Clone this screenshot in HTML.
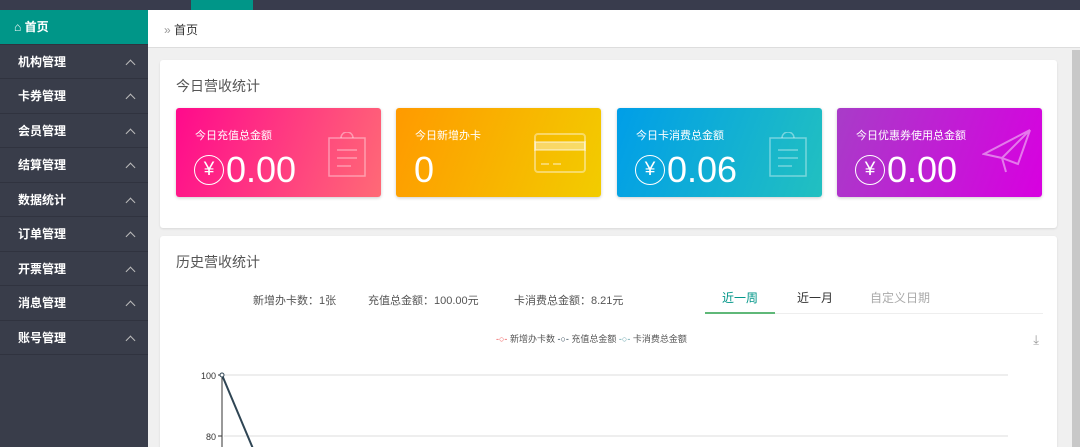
<!DOCTYPE html><html><head><meta charset="utf-8"><style>
*{margin:0;padding:0;box-sizing:border-box}
html,body{width:1080px;height:447px;overflow:hidden}
body{background:#f0f0f0;font-family:"Liberation Sans","Noto Sans CJK SC",sans-serif;position:relative}
.top{position:absolute;left:0;top:0;width:1080px;height:10px;background:#393c4d}
.side{position:absolute;left:0;top:10px;width:148px;height:437px;background:#393d4a}
.mi{height:34.5px;border-bottom:1px solid #30333f;color:#fff;font-size:12px;font-weight:bold;line-height:34px;padding-left:18px;position:relative}
.mi:after{content:"";position:absolute;right:14px;top:16px;width:6px;height:6px;border-left:1px solid #bbb;border-top:1px solid #bbb;transform:rotate(45deg)}
.home{background:#009688;padding-left:14px}
.home:after{display:none}
.crumb{position:absolute;left:148px;top:10px;width:932px;height:38px;background:#fff;border-bottom:1px solid #ddd;font-size:12px;color:#333;line-height:40px;padding-left:16px}
.panel{position:absolute;left:160px;width:897px;background:#fff;border-radius:3px;box-shadow:0 1px 2px rgba(0,0,0,.1)}
.pt{position:absolute;left:16px;top:16px;font-size:14px;color:#555}
.card{position:absolute;top:48px;width:205px;height:89px;border-radius:3px;color:#fff;box-shadow:0 1px 3px rgba(0,0,0,.2)}
.card .l{position:absolute;left:19px;top:19px;font-size:11px}
.card .v{position:absolute;left:18px;top:40px;font-size:36px;line-height:44px;display:flex;align-items:center}
.yen{display:inline-block;width:30px;height:30px;border:1px solid #fff;border-radius:50%;font-size:19px;line-height:28px;text-align:center;margin-right:2px;font-weight:300}
.card svg{position:absolute;right:14px;top:24px}
.sb{position:absolute;right:0;top:50px;width:8px;height:397px;background:#c8c8c8}
</style></head><body>
<div class="top"><div style="position:absolute;left:191px;width:62px;height:10px;background:#009688"></div></div>
<div class="side">
<div class="mi home">⌂ 首页</div>
<div class="mi">机构管理</div><div class="mi">卡券管理</div><div class="mi">会员管理</div><div class="mi">结算管理</div><div class="mi">数据统计</div><div class="mi">订单管理</div><div class="mi">开票管理</div><div class="mi">消息管理</div><div class="mi">账号管理</div>
</div>
<div class="crumb"><span style="color:#999">»</span> 首页</div>
<div class="panel" style="top:60px;height:168px">
<div class="pt">今日营收统计</div>
<div class="card" style="left:16px;background:linear-gradient(110deg,#ff0a8c,#ff6a76)"><div class="l">今日充值总金额</div><div class="v"><span class="yen">¥</span>0.00</div>
<svg width="40" height="46" fill="none" stroke="rgba(255,255,255,.4)" stroke-width="1.5"><rect x="2" y="6" width="36" height="38"/><path d="M14 6a6 6 0 0 1 12 0M10 18h20M10 26h20M10 34h14"/></svg></div>
<div class="card" style="left:236px;background:linear-gradient(110deg,#ff9a00,#f2cc00)"><div class="l">今日新增办卡</div><div class="v">0</div>
<svg width="54" height="42" fill="none" stroke="rgba(255,255,255,.4)" stroke-width="2"><rect x="2" y="2" width="50" height="38" rx="3"/><rect x="2" y="10" width="50" height="8" fill="rgba(255,255,255,.4)"/><path d="M8 32h8M20 32h8"/></svg></div>
<div class="card" style="left:457px;background:linear-gradient(110deg,#009ee8,#22c0c0)"><div class="l">今日卡消费总金额</div><div class="v"><span class="yen">¥</span>0.06</div>
<svg width="40" height="46" fill="none" stroke="rgba(255,255,255,.4)" stroke-width="1.5"><rect x="2" y="6" width="36" height="38"/><path d="M14 6a6 6 0 0 1 12 0M10 18h20M10 26h20M10 34h14"/></svg></div>
<div class="card" style="left:677px;background:linear-gradient(110deg,#a83cc8,#d800e0)"><div class="l">今日优惠券使用总金额</div><div class="v"><span class="yen">¥</span>0.00</div>
<svg width="50" height="46" fill="none" stroke="rgba(255,255,255,.45)" stroke-width="2" style="top:20px;right:10px"><path d="M48 2L2 26l18 4zM48 2L20 30l4 14M48 2L36 36 20 30"/></svg></div>
</div>
<div class="panel" style="top:236px;height:211px;border-radius:3px 3px 0 0">
<div class="pt">历史营收统计</div>
<div style="position:absolute;top:56px;left:93px;font-size:11px;color:#555">新增办卡数：1张</div>
<div style="position:absolute;top:56px;left:208px;font-size:11px;color:#555">充值总金额：100.00元</div>
<div style="position:absolute;top:56px;left:354px;font-size:11px;color:#555">卡消费总金额：8.21元</div>
<div style="position:absolute;top:50px;left:545px;width:338px;height:28px;border-bottom:1px solid #eee;font-size:12px;color:#333">
<div style="position:absolute;left:0;width:70px;text-align:center;color:#009688;height:28px;border-bottom:2px solid #5fb878;line-height:24px">近一周</div>
<div style="position:absolute;left:70px;width:80px;text-align:center;line-height:24px">近一月</div>
<div style="position:absolute;left:150px;width:90px;text-align:center;line-height:24px;color:#aaa">自定义日期</div></div>
<div style="position:absolute;top:96px;left:336px;font-size:9px;color:#555"><span style="color:#e55">-○-</span> 新增办卡数 <span style="color:#2f4554">-○-</span> 充值总金额 <span style="color:#61a0a8">-○-</span> 卡消费总金额</div>
<div style="position:absolute;top:96px;right:18px;color:#999;font-size:13px">⤓</div>
<svg width="897" height="211" style="position:absolute;left:0;top:0">
<line x1="64" y1="139" x2="848" y2="139" stroke="#ddd"/><line x1="64" y1="200" x2="848" y2="200" stroke="#ddd"/>
<line x1="62" y1="139" x2="62" y2="211" stroke="#333"/>
<line x1="58" y1="139" x2="62" y2="139" stroke="#333"/><line x1="58" y1="200" x2="62" y2="200" stroke="#333"/>
<text x="56" y="143" font-size="9" text-anchor="end" fill="#333">100</text><text x="56" y="204" font-size="9" text-anchor="end" fill="#333">80</text>
<path d="M62 139L94 215" stroke="#2f4554" stroke-width="2"/><circle cx="62" cy="139" r="2" fill="#fff" stroke="#2f4554"/>
</svg>
</div>
<div class="sb"></div>
</body></html>
